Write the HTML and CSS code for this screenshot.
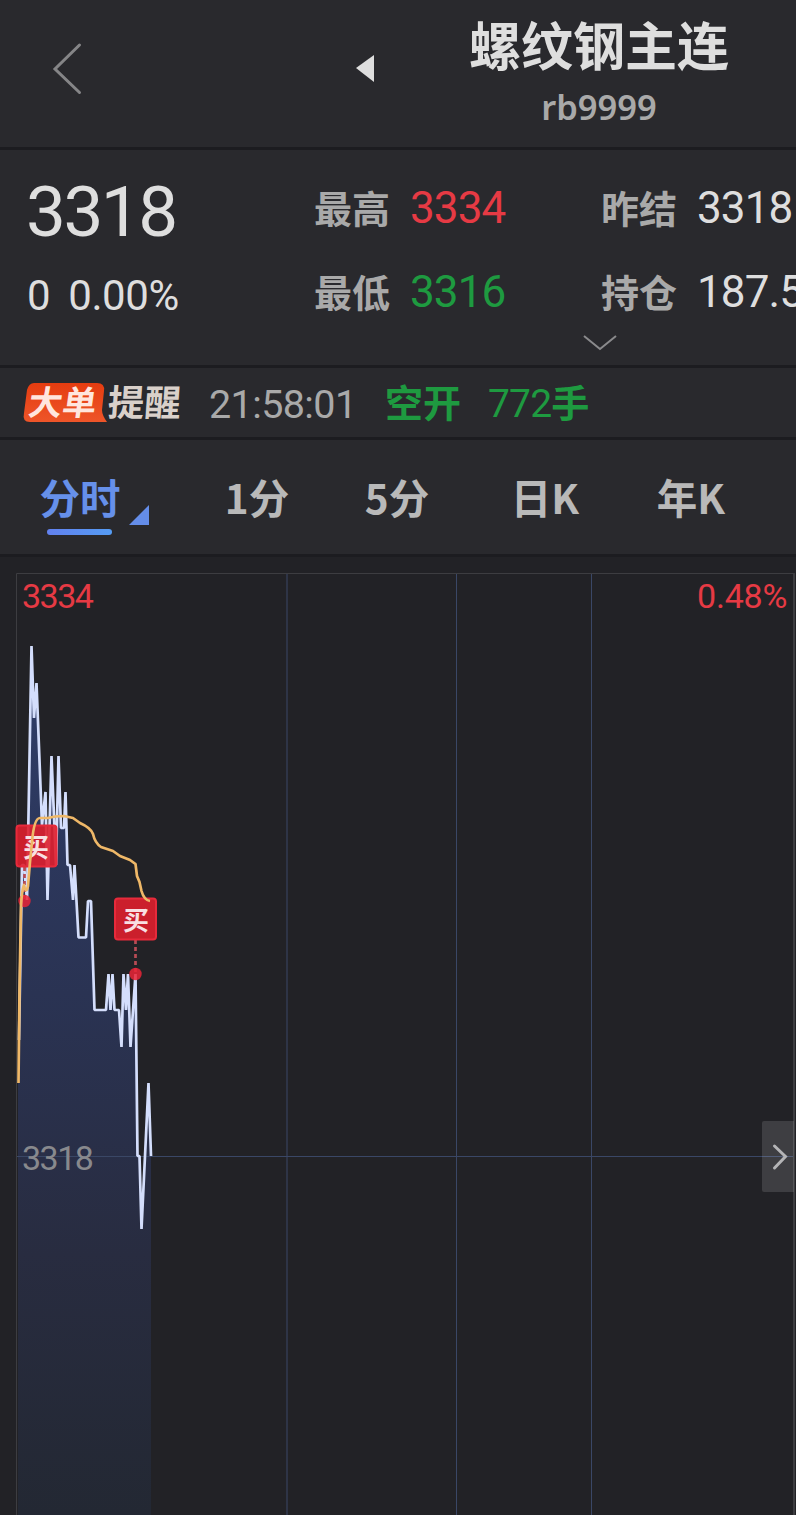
FILE: index.html
```
<!DOCTYPE html>
<html lang="zh-CN">
<head>
    <meta charset="UTF-8">
    <meta name="viewport" content="width=device-width, initial-scale=1.0">
    <title>螺纹钢主连</title>
    <link rel="stylesheet" href="styles.css">
</head>
<body>
    <header class="header">
        <svg class="back" width="32" height="56" viewBox="0 0 32 56">
            <path d="M28.500 4 L4 28 L28.500 51.500" />
        </svg>
        <svg class="prev" width="18" height="27" viewBox="0 0 18 27">
            <path d="M0 13 L18 0 V27 Z" />
        </svg>
        <div class="title">
            <h1>螺纹钢主连</h1>
            <p>rb9999</p>
        </div>
    </header>

    <section class="quote">
        <div class="price">
            <div class="last">3318</div>
            <div class="change"><span>0</span><span>0.00%</span></div>
        </div>
        <div class="stats">
            <div class="stat"><label>最高</label><span class="red">3334</span></div>
            <div class="stat"><label>最低</label><span class="green">3316</span></div>
        </div>
        <div class="stats">
            <div class="stat"><label>昨结</label><span>3318</span></div>
            <div class="stat"><label>持仓</label><span>187.5</span></div>
        </div>
        <svg class="more" width="36" height="18" viewBox="0 0 36 18">
            <path d="M2 2 L18 15 L34 2" />
        </svg>
    </section>

    <section class="alert">
        <svg class="badge" width="162" height="44" viewBox="0 0 162 44">
            <defs>
                <linearGradient id="badge-fill" x1="0" y1="0" x2="0" y2="1">
                    <stop offset="0" stop-color="#e53c10" />
                    <stop offset="1" stop-color="#ee5529" />
                </linearGradient>
            </defs>
            <path d="M11 2 H74 Q82 2 81 10 L79 29 Q79 34 84 41 H7 Q-1 41 1 32 L4 9 Q6 2 11 2 Z" fill="url(#badge-fill)" />
            <text class="badge-hot" transform="translate(4 34) skewX(-8)">大单</text>
            <text class="badge-text" transform="translate(84 35) skewX(-4)">提醒</text>
        </svg>
        <span class="time">21:58:01</span>
        <span class="side">空开</span>
        <span class="volume"><b>772</b>手</span>
    </section>

    <nav class="tabs">
        <a class="tab active">分时</a>
        <a class="tab">1分</a>
        <a class="tab">5分</a>
        <a class="tab">日K</a>
        <a class="tab">年K</a>
    </nav>

    <main class="chart">
        <svg width="796" height="958" viewBox="0 557 796 958">
            <defs>
                <linearGradient id="area" gradientUnits="userSpaceOnUse" x1="0" y1="646" x2="0" y2="1515">
                    <stop offset="0" stop-color="#2f3d69" />
                    <stop offset="0.4" stop-color="#2a3353" />
                    <stop offset="0.7" stop-color="#282c40" />
                    <stop offset="1" stop-color="#232833" />
                </linearGradient>
            </defs>

            <!-- price area -->
            <path fill="url(#area)" d="M18 1515 V1083 L22 865 H24 L27 900 L31.500 646 L34 718 L36.500 683 L42 825 L45.500 792 L47.500 900 L51.500 756 L56 865 L58.500 756 L61 828 H64 L65.500 792 L67.500 865 H70 L73 900 L74.500 865 L78 937 H86 L88 900 H91 L94.500 1010 H106 L108.500 974 L110.500 1010 L112.500 974 L114.500 1010 H119 L121.500 1047 L123.500 974 L126 1010 L128 974 L130.500 1047 L135.500 974 L137.500 1156 H139.500 L141.500 1229 L148.500 1083 L151 1156 V1515 Z" />

            <!-- grid -->
            <path class="frame" d="M16.500 1515 V573.500 H794" />
            <path class="frame right" d="M794 573 V1515" />
            <path class="grid" d="M287 574 V1515 M456.500 574 V1515 M591.500 574 V1515 M17 1156.500 H793" />

            <!-- price line -->
            <path class="line" d="M19 1040 L22 865 H24 L27 900 L31.500 646 L34 718 L36.500 683 L42 825 L45.500 792 L47.500 900 L51.500 756 L56 865 L58.500 756 L61 828 H64 L65.500 792 L67.500 865 H70 L73 900 L74.500 865 L78.500 937.500 H86 L88 901 H91 L94.500 1010 H106 L108.500 974 L110.500 1010 L112.500 974 L114.500 1010 H119 L121.500 1047 L123.500 974 L126 1010 L128 974 L130.500 1047 L135.500 974 L137.500 1156 H139.500 L141.500 1229 L148.500 1083 L151 1156" />

            <!-- buy marks -->
            <g class="mark">
                <path d="M24.500 867 V900" />
                <circle cx="24.500" cy="901" r="6.200" />
                <rect x="16.500" y="825.500" width="40" height="41" rx="3" />
                <text x="36" y="857">买</text>
            </g>
            <g class="mark">
                <path d="M135.500 940 V972" />
                <circle cx="135.500" cy="974" r="6.200" />
                <rect x="115" y="898.500" width="41" height="41" rx="3" />
                <text x="136" y="930">买</text>
            </g>

            <!-- average line -->
            <path class="average" d="M18.500 1083 L19.500 990 L21 905 Q22 890 24 885 Q26 895 28 886 L30 862 L32 842 Q34 818 40 818 L48 818 L55 816.500 L64 816 L73 818 L80 823 Q91 828 93 834 Q95 843 101 847 L113 851 L120 856 L130 860 L135.500 864 L137 876 L139.500 882 L141.500 891 Q144 900 150 901" />

            <text class="axis red" x="22" y="608">3334</text>
            <text class="axis red percent" x="697" y="608">0.48%</text>
            <text class="axis" x="22" y="1170">3318</text>

            <!-- side panel handle -->
            <path class="handle" d="M764 1121 H794 V1192 H764 Q762 1192 762 1190 V1123 Q762 1121 764 1121 Z" />
            <path class="arrow" d="M774.500 1146 L785.500 1156.500 L774.500 1168" />
        </svg>
    </main>
</body>
</html>
```
FILE: styles.css
```
* {
    margin: 0;
    padding: 0;
    box-sizing: border-box;
}

body {
    width: 796px;
    height: 1515px;
    overflow: hidden;
    background-color: #222226;
    color: #dedede;
    font-family: "Noto Sans CJK SC", sans-serif;
}

svg {
    display: block;
    flex-shrink: 0;
    fill: none;
}

/* Header */
.header {
    display: flex;
    height: 150px;
    padding-left: 51px;
    background-color: #29292d;
    border-bottom: 3px solid #1c1c20;
}

.back {
    margin-top: 41px;
    stroke: #858587;
    stroke-width: 3;
    stroke-linecap: round;
}

.prev {
    margin: 55px 0 0 273px;
    fill: #dedede;
}

.title {
    flex: none;
    width: 450px;
    text-align: center;
}

.title h1 {
    margin-top: 6px;
    font-size: 52px;
    font-weight: 700;
    line-height: 76px;
}

.title p {
    margin-top: 2px;
    color: #a9a9a9;
    font-family: "Noto Sans", sans-serif;
    font-size: 34.5px;
    font-weight: 600;
    line-height: 46px;
}

/* Quote */
.quote {
    position: relative;
    display: grid;
    grid-template-columns: 287px 287px 287px;
    height: 218px;
    padding-left: 27px;
    overflow: hidden;
    background-color: #29292d;
    border-bottom: 3px solid #1c1c20;
    font-family: Roboto, sans-serif;
}

.last {
    margin-top: 22px;
    font-size: 71px;
    line-height: 80px;
    letter-spacing: -2.5px;
    text-indent: -1px;
}

.change {
    display: flex;
    gap: 18px;
    margin-top: 19px;
    font-size: 42px;
    line-height: 50px;
    letter-spacing: -0.4px;
}

.stats {
    padding-top: 16px;
}

.stat {
    display: flex;
    align-items: center;
    height: 84px;
}

.stat label {
    width: 96px;
    margin-top: -3px;
    color: #a9a9a9;
    font-family: "Noto Sans CJK SC", sans-serif;
    font-size: 38px;
    font-weight: 700;
}

.stat span {
    font-size: 44px;
    letter-spacing: -0.9px;
}

.red {
    color: #e63a44;
}

.green {
    color: #1e9a40;
}

.more {
    position: absolute;
    left: 582px;
    top: 184px;
    stroke: #8a8a8c;
    stroke-width: 2;
}

/* Large order alert */
.alert {
    display: flex;
    align-items: center;
    height: 72px;
    padding-left: 23px;
    background-color: #29292d;
    border-bottom: 3px solid #1c1c20;
    color: #1e9a40;
    font-size: 38px;
    font-weight: 700;
}

.badge {
    overflow: visible;
}

.badge-hot {
    fill: #ffe6de;
    font-size: 34px;
    font-weight: 700;
}

.badge-text {
    fill: #d9d0ca;
    font-size: 36.5px;
    font-weight: 700;
}

.time {
    width: 176px;
    margin: 3px 0 0 24px;
    color: #a9a9a9;
    font-family: Roboto, sans-serif;
    font-size: 39.5px;
    font-weight: 400;
    letter-spacing: -0.6px;
}

.side {
    width: 103px;
    margin-top: -5px;
}

.volume {
    margin-top: -5px;
}

.volume b {
    font-family: Roboto, sans-serif;
    font-size: 39px;
    font-weight: 400;
    letter-spacing: -0.8px;
}

/* Period tabs */
.tabs {
    display: grid;
    grid-template-columns: 160px 194px 86px 210px 82px;
    height: 117px;
    background-color: #29292d;
    border-bottom: 3px solid #1c1c20;
}

.tab {
    position: relative;
    color: #b9b9b9;
    font-size: 40.5px;
    font-weight: 700;
    line-height: 114px;
    text-align: center;
}

.active {
    color: #6690ea;
}

.active::before {
    content: "";
    position: absolute;
    left: 47px;
    bottom: 19px;
    width: 65px;
    height: 6px;
    border-radius: 3px;
    background: linear-gradient(90deg, #6281ef, #559cf4);
}

.active::after {
    content: "";
    position: absolute;
    left: 129px;
    bottom: 29px;
    width: 20px;
    height: 20px;
    background-color: #648de9;
    clip-path: polygon(100% 0, 100% 100%, 0 100%);
}

/* Chart */
.frame {
    stroke: #3d3d41;
}

.right {
    stroke-width: 2;
}

.grid {
    stroke: #3a4766;
    stroke-width: 1;
}

.line {
    stroke: #d4defc;
    stroke-width: 2.7;
    stroke-linejoin: bevel;
}

.average {
    stroke: #efb868;
    stroke-width: 2.7;
    stroke-linejoin: round;
}

.mark path {
    stroke: #b84b55;
    stroke-width: 2.7;
    stroke-dasharray: 4 3;
}

.mark circle {
    fill: #ea2537;
    fill-opacity: 0.85;
}

.mark rect {
    fill: #de1f2d;
    fill-opacity: 0.9;
    stroke: #e72a3b;
    stroke-width: 2;
}

.mark text {
    fill: #f8dfe2;
    font-size: 26px;
    font-weight: 700;
    text-anchor: middle;
}

.axis {
    fill: #88898d;
    font-family: Roboto, sans-serif;
    font-size: 34px;
    letter-spacing: -1.5px;
}

.axis.red {
    fill: #e63a44;
}

.axis.percent {
    letter-spacing: -0.2px;
}

.handle {
    fill: #ffffff;
    fill-opacity: 0.13;
}

.arrow {
    stroke: #b4b4b6;
    stroke-width: 3;
    stroke-linecap: round;
}
```
